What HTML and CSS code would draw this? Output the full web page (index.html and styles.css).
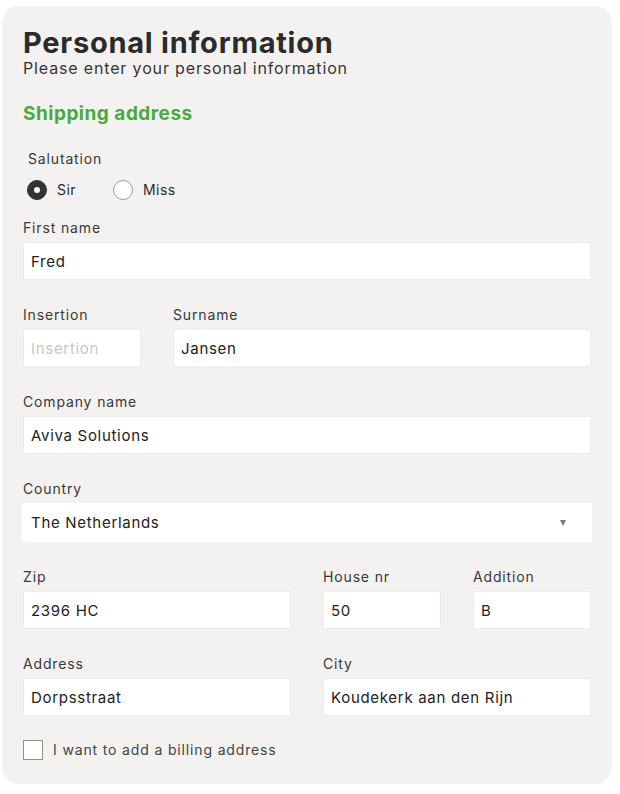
FILE: index.html
```html
<!DOCTYPE html>
<html lang="en">
<head>
<meta charset="utf-8">
<title>Personal information</title>
<link rel="stylesheet" href="styles.css">
</head>
<body>
<form class="card">
  <h1 class="title">Personal information</h1>
  <p class="subtitle">Please enter your personal information</p>
  <h2 class="section">Shipping address</h2>

  <div class="salutation">
    <div class="sal-label">Salutation</div>
    <div class="radios">
      <label class="radio"><span class="dot checked"></span><span>Sir</span></label>
      <label class="radio"><span class="dot"></span><span>Miss</span></label>
    </div>
  </div>

  <div class="grid">
    <div class="field span4">
      <label class="lbl">First name</label>
      <input class="inp" type="text" value="Fred">
    </div>

    <div class="field span1">
      <label class="lbl">Insertion</label>
      <input class="inp" type="text" placeholder="Insertion">
    </div>
    <div class="field span3">
      <label class="lbl">Surname</label>
      <input class="inp" type="text" value="Jansen">
    </div>

    <div class="field span4">
      <label class="lbl">Company name</label>
      <input class="inp" type="text" value="Aviva Solutions">
    </div>

    <div class="field span4">
      <label class="lbl">Country</label>
      <div class="select-wrap">
        <select class="sel"><option>The Netherlands</option></select>
      </div>
    </div>

    <div class="field span2">
      <label class="lbl">Zip</label>
      <input class="inp" type="text" value="2396 HC">
    </div>
    <div class="field span1">
      <label class="lbl">House nr</label>
      <input class="inp" type="text" value="50">
    </div>
    <div class="field span1">
      <label class="lbl">Addition</label>
      <input class="inp" type="text" value="B">
    </div>

    <div class="field span2">
      <label class="lbl">Address</label>
      <input class="inp" type="text" value="Dorpsstraat">
    </div>
    <div class="field span2">
      <label class="lbl">City</label>
      <input class="inp" type="text" value="Koudekerk aan den Rijn">
    </div>
  </div>

  <label class="check">
    <span class="box"></span>
    <span>I want to add a billing address</span>
  </label>
</form>
</body>
</html>
```

FILE: styles.css
```css
* { box-sizing: border-box; }

html, body {
  margin: 0;
  padding: 0;
  background: #ffffff;
}

body {
  padding: 6px 8px 10px 2px;
  font-family: Inter, "Open Sans", "Liberation Sans", sans-serif;
  color: #333333;
}

.card {
  width: 610px;
  background: #f3f2f0;
  border-radius: 17px;
  padding: 21px 21px 24px 21px;
}

.title {
  margin: 0;
  font-size: 29px;
  line-height: 32px;
  font-weight: 700;
  color: #2b2b2b;
  letter-spacing: 0.75px;
}

.subtitle {
  margin: -1px 0 0 0;
  font-size: 16px;
  line-height: 20px;
  color: #363636;
  letter-spacing: 0.85px;
}

.section {
  margin: 24px 0 0 0;
  font-size: 19px;
  line-height: 24px;
  font-weight: 700;
  color: #4aab3d;
  letter-spacing: 0.5px;
}

.salutation {
  margin-top: 23px;
  padding-left: 5px;
}

.sal-label {
  font-size: 14px;
  line-height: 20px;
  color: #383838;
  letter-spacing: 0.85px;
}

.radios {
  margin-top: 11px;
  display: flex;
  gap: 37px;
  margin-left: -1px;
}

.radio {
  display: flex;
  align-items: center;
  gap: 10px;
  font-size: 14px;
  line-height: 20px;
  color: #2b2b2b;
  letter-spacing: 0.45px;
}

.dot {
  width: 20px;
  height: 20px;
  border-radius: 50%;
  border: 1px solid #9c9f92;
  background: #ffffff;
  display: flex;
  align-items: center;
  justify-content: center;
}

.dot.checked {
  background: #333333;
  border-color: #333333;
}

.dot.checked::after {
  content: "";
  width: 6px;
  height: 6px;
  border-radius: 50%;
  background: #ffffff;
}

.grid {
  margin-top: 18px;
  display: grid;
  grid-template-columns: repeat(4, 118px);
  column-gap: 32px;
  row-gap: 25.1px;
}

.span1 { grid-column: span 1; }
.span2 { grid-column: span 2; }
.span3 { grid-column: span 3; }
.span4 { grid-column: span 4; }

.field {
  display: flex;
  flex-direction: column;
}

.lbl {
  font-size: 14px;
  line-height: 20px;
  color: #383838;
  letter-spacing: 0.85px;
  margin-bottom: 4px;
}

.inp {
  width: 100%;
  height: 38px;
  margin: 0;
  border: 1px solid #eeece8;
  background: #ffffff;
  padding: 0 7px;
  font-family: Inter, "Open Sans", "Liberation Sans", sans-serif;
  font-size: 15px;
  letter-spacing: 0.7px;
  color: #222222;
  outline: none;
}

.inp::placeholder {
  color: #c9c7c4;
}

.select-wrap {
  position: relative;
  margin-left: -1px;
}

.sel {
  appearance: none;
  -webkit-appearance: none;
  width: 570px;
  height: 39px;
  margin: 0;
  border: none;
  background: #ffffff;
  padding: 0 9px;
  font-family: Inter, "Open Sans", "Liberation Sans", sans-serif;
  font-size: 15px;
  letter-spacing: 0.7px;
  color: #222222;
  outline: none;
}

.select-wrap::after {
  content: "";
  position: absolute;
  left: 538px;
  top: 17px;
  border-left: 3.5px solid transparent;
  border-right: 3.5px solid transparent;
  border-top: 6px solid #7a7a7a;
}

.check {
  margin-top: 24px;
  display: flex;
  align-items: center;
  gap: 10px;
  font-size: 14px;
  line-height: 20px;
  color: #444444;
  letter-spacing: 0.85px;
}

.box {
  width: 20px;
  height: 20px;
  border: 1px solid #8d9385;
  background: #ffffff;
}
```
